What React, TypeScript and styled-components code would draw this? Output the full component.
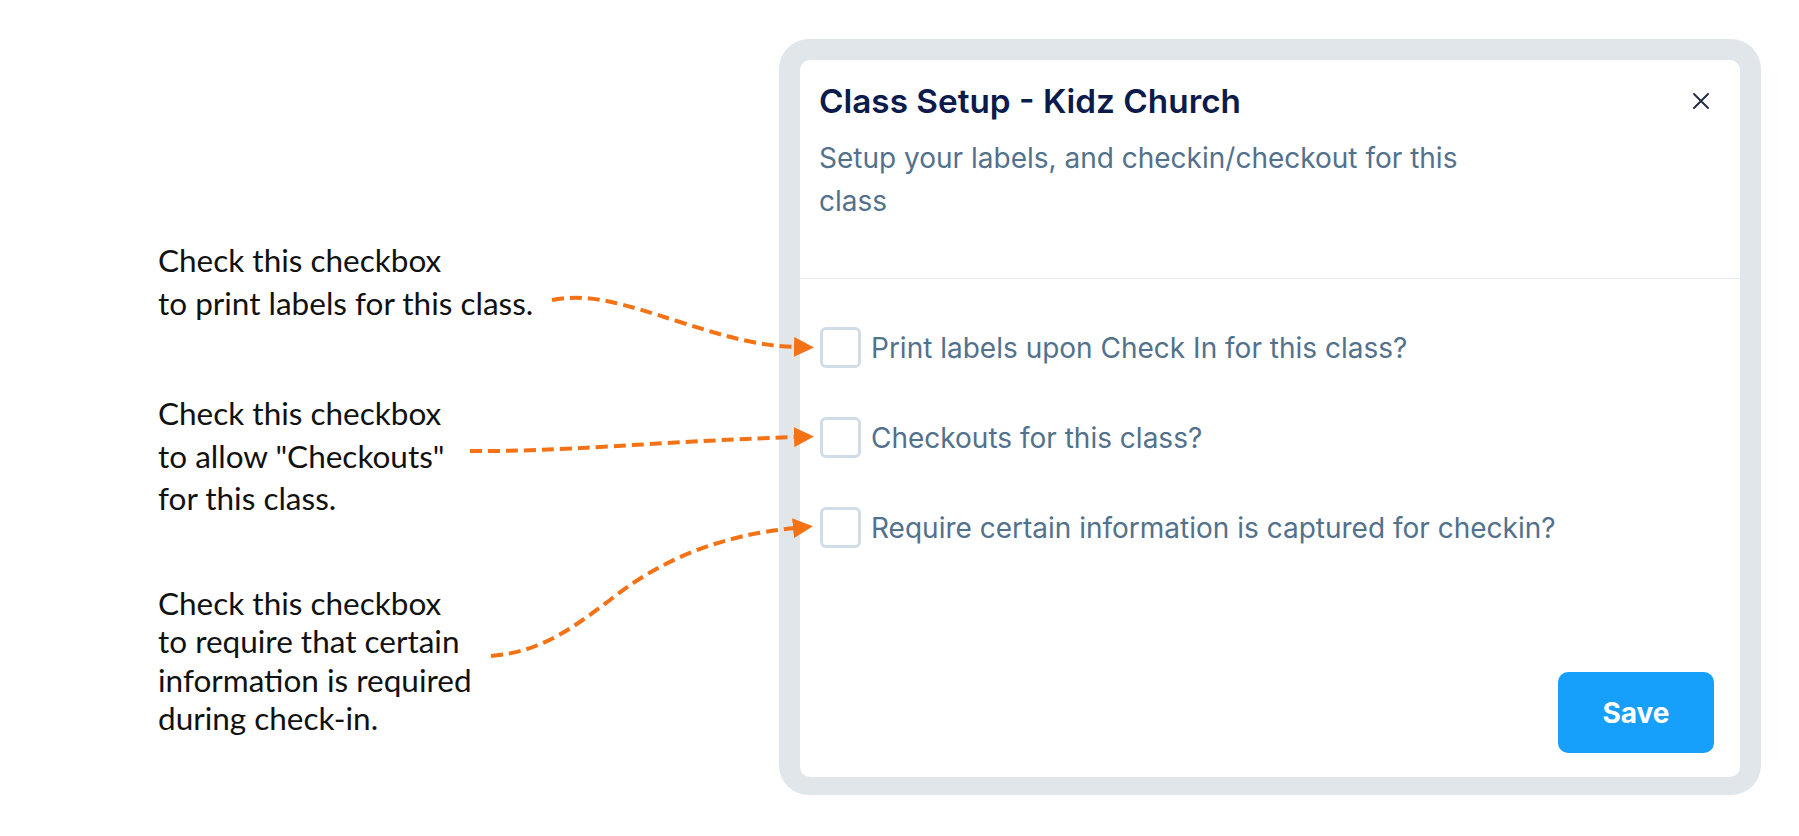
import styled, { createGlobalStyle } from "styled-components";

const GlobalStyle = createGlobalStyle`
  html, body {
    margin: 0;
    padding: 0;
    background: #ffffff;
  }
  * {
    box-sizing: border-box;
  }
`;

const Page = styled.div`
  position: relative;
  display: flex;
  align-items: flex-start;
  width: 1799px;
  height: 836px;
  padding-top: 39px;
  overflow: hidden;
`;

const Notes = styled.div`
  display: flex;
  flex-direction: column;
  width: 779px;
  padding-left: 158px;
`;

const Note = styled.p<{ $top: number; $lh: number }>`
  margin: ${(p) => p.$top}px 0 0;
  font-family: Lato, "Liberation Sans", sans-serif;
  font-size: 31.5px;
  line-height: ${(p) => p.$lh}px;
  color: #111111;
`;

const Frame = styled.div`
  width: 982px;
  height: 756px;
  padding: 21px 21px 18px;
  background: #e1e6ea;
  border-radius: 30px;
`;

const Card = styled.div`
  display: flex;
  flex-direction: column;
  height: 100%;
  background: #ffffff;
  border-radius: 10px;
  font-family: Inter, "Liberation Sans", sans-serif;
`;

const Header = styled.div`
  padding: 23px 31px 56px 19px;
`;

const TitleRow = styled.div`
  display: flex;
  align-items: center;
  justify-content: space-between;
`;

const Title = styled.h2`
  margin: 0;
  font-size: 33.3px;
  line-height: 36px;
  font-weight: 600;
  color: #0d1b4c;
`;

const CloseButton = styled.button`
  display: flex;
  padding: 0;
  border: 0;
  background: none;
  cursor: pointer;
`;

const Subtitle = styled.p`
  max-width: 670px;
  margin: 18px 0 0;
  font-size: 28px;
  line-height: 42.5px;
  color: #52718c;
`;

const Divider = styled.div`
  height: 1px;
  background: #e8ecf0;
`;

const Options = styled.div`
  display: flex;
  flex-direction: column;
  gap: 49px;
  padding: 48px 20px 0;
`;

const OptionRow = styled.label`
  display: flex;
  align-items: center;
  gap: 10px;
  font-size: 28px;
  color: #52718c;
  cursor: pointer;
`;

const Box = styled.span`
  width: 41px;
  height: 41px;
  flex-shrink: 0;
  border: 3px solid #d0dde8;
  border-radius: 6px;
  background: #ffffff;
`;

const Footer = styled.div`
  display: flex;
  justify-content: flex-end;
  margin-top: auto;
  padding: 0 26px 24px;
`;

const SaveButton = styled.button`
  width: 156px;
  height: 81px;
  border: 0;
  border-radius: 10px;
  background: #17a0fb;
  color: #ffffff;
  font-family: Inter, "Liberation Sans", sans-serif;
  font-size: 28px;
  font-weight: 700;
  cursor: pointer;
`;

const Arrows = styled.svg`
  position: absolute;
  top: 0;
  left: 0;
  pointer-events: none;
`;

const notes = [
  { top: 200, lh: 42.5, lines: ["Check this checkbox", "to print labels for this class."] },
  { top: 68, lh: 42.5, lines: ["Check this checkbox", 'to allow "Checkouts"', "for this class."] },
  {
    top: 64,
    lh: 38.5,
    lines: [
      "Check this checkbox",
      "to require that certain",
      "information is required",
      "during check-in.",
    ],
  },
];

const options = [
  "Print labels upon Check In for this class?",
  "Checkouts for this class?",
  "Require certain information is captured for checkin?",
];

const arrowPaths = [
  "M552 300 C 590 293, 620 303, 680 322 C 730 338, 760 346, 796 347",
  "M470 451 C 560 452, 650 442, 796 437",
  "M491 656 C 540 652, 570 630, 610 600 C 660 560, 720 535, 795 528",
];

export default function App() {
  return (
    <>
      <GlobalStyle />
      <Page>
        <Notes>
          {notes.map((n, i) => (
            <Note key={i} $top={n.top} $lh={n.lh}>
              {n.lines.map((l, j) => (
                <span key={j}>
                  {l}
                  {j < n.lines.length - 1 && <br />}
                </span>
              ))}
            </Note>
          ))}
        </Notes>
        <Frame>
          <Card>
            <Header>
              <TitleRow>
                <Title>Class Setup - Kidz Church</Title>
                <CloseButton aria-label="Close">
                  <svg width="16" height="16" viewBox="0 0 16 16">
                    <path
                      d="M1 1 L15 15 M15 1 L1 15"
                      stroke="#1e2740"
                      strokeWidth="1.8"
                      strokeLinecap="round"
                    />
                  </svg>
                </CloseButton>
              </TitleRow>
              <Subtitle>
                Setup your labels, and checkin/checkout for this class
              </Subtitle>
            </Header>
            <Divider />
            <Options>
              {options.map((o) => (
                <OptionRow key={o}>
                  <Box />
                  {o}
                </OptionRow>
              ))}
            </Options>
            <Footer>
              <SaveButton>Save</SaveButton>
            </Footer>
          </Card>
        </Frame>
        <Arrows width="1799" height="836" viewBox="0 0 1799 836">
          <defs>
            <marker
              id="head"
              markerUnits="userSpaceOnUse"
              markerWidth="20"
              markerHeight="20"
              refX="2"
              refY="10"
              orient="auto"
            >
              <path d="M0 0 L20 10 L0 20 z" fill="#f47216" />
            </marker>
          </defs>
          {arrowPaths.map((d) => (
            <path
              key={d}
              d={d}
              fill="none"
              stroke="#f47216"
              strokeWidth="4"
              strokeDasharray="12 6"
              markerEnd="url(#head)"
            />
          ))}
        </Arrows>
      </Page>
    </>
  );
}
